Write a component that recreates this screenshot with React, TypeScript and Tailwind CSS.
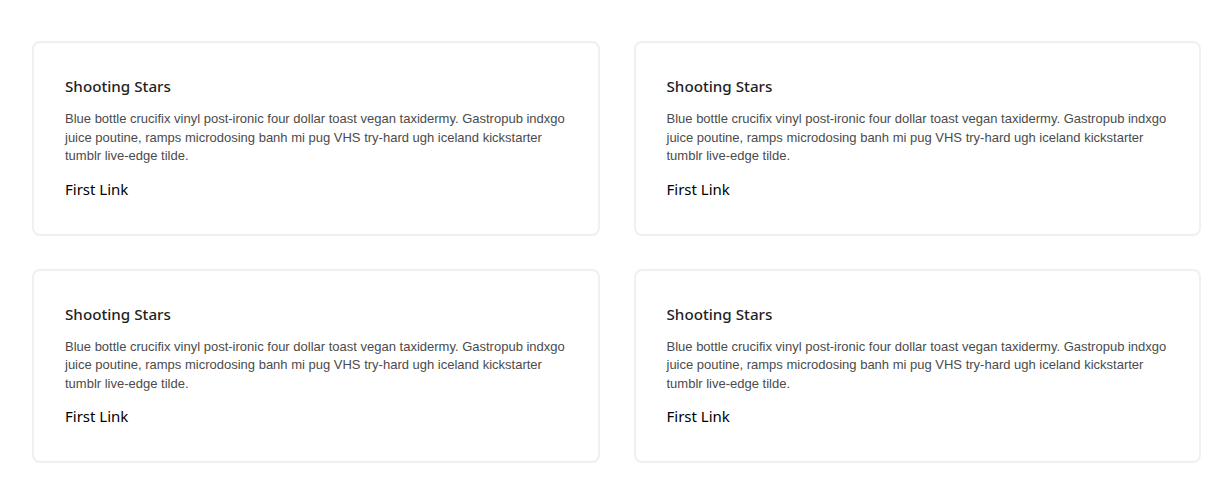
const cards = [0, 1, 2, 3];

function Card() {
  return (
    <div className="rounded-lg border-2 border-[#f0f0f0] bg-white px-[31px] pt-[33px] pb-[35px]">
      <h3 className="font-['Noto_Sans',sans-serif] text-[15.2px] leading-5 font-medium text-[#1f1f1f]">
        Shooting Stars
      </h3>
      <p className="mt-[14px] font-['Liberation_Sans',Arial,sans-serif] text-[13px] leading-[18.5px] text-[#4b4b4b]">
        Blue bottle crucifix vinyl post-ironic four dollar toast vegan taxidermy. Gastropub indxgo juice poutine, ramps
        microdosing banh mi pug VHS try-hard ugh iceland kickstarter tumblr live-edge tilde.
      </p>
      <a href="#" className="mt-[13px] block font-['Noto_Sans',sans-serif] text-[15px] leading-5 text-black">
        First Link
      </a>
    </div>
  );
}

export default function App() {
  return (
    <div className="min-h-screen bg-white pt-[41px] pl-8 pr-[29px]">
      <div className="grid grid-cols-2 gap-x-[34px] gap-y-[33px]">
        {cards.map((i) => (
          <Card key={i} />
        ))}
      </div>
    </div>
  );
}
